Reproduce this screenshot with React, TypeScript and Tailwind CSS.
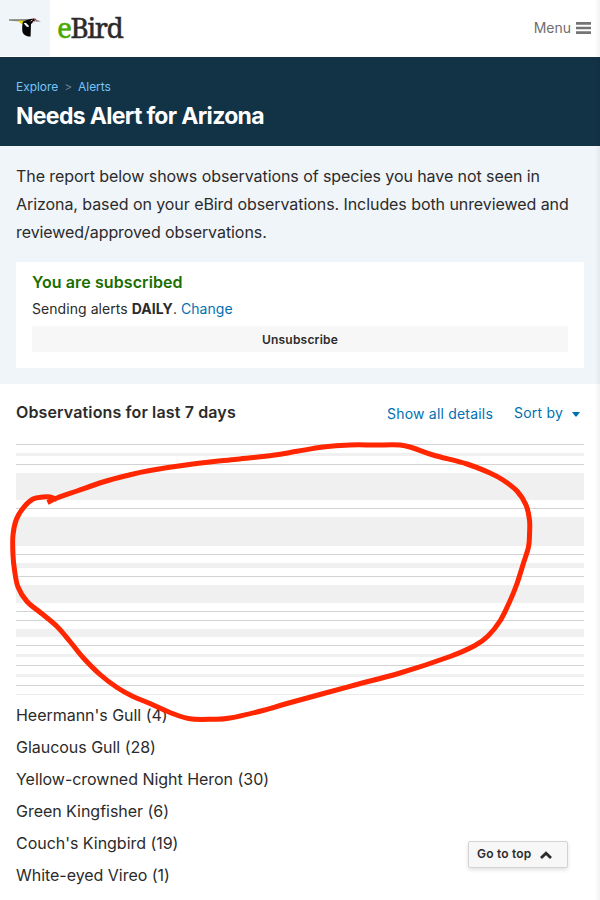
import React from "react";

const sightings = [3, 27, 29, 5, 18, 0, 8, 3, 3];

const species = [
  "Heermann's Gull (4)",
  "Glaucous Gull (28)",
  "Yellow-crowned Night Heron (30)",
  "Green Kingfisher (6)",
  "Couch's Kingbird (19)",
  "White-eyed Vireo (1)",
];

const strokePoints: [number, number][] = [
  [47.5, 502.5], [57, 498], [77, 491], [103, 482], [127, 475.5], [150, 470.5], [193, 464], [237, 459.2],
  [273, 455.3], [297, 451.3], [323, 447], [350, 445], [375, 445], [400, 445], [413, 448], [433, 455],
  [467, 464], [490, 473], [503, 480], [517, 491], [526, 505], [529.5, 520], [529.5, 535], [528.5, 547],
  [523.5, 563], [516.5, 585], [509.5, 602], [500, 621], [488, 636], [475, 645.5], [450, 656.5], [400, 673],
  [350, 686.3], [287, 703.5], [263, 710.5], [230, 718], [213, 719.2], [190, 718.8], [170, 712.5],
  [150, 703.5], [133, 696.5], [117, 687.5], [100, 674.5], [83, 657.5], [70, 641.5], [57, 626.5],
  [41, 613], [27, 601.5], [18, 587], [14.5, 570], [13, 555], [13, 535], [16.5, 519], [24, 507],
  [33, 499], [43, 497], [50, 497], [57, 499.5],
];

// Smooths the freehand points into cubic segments.
function smoothPath(pts: [number, number][]) {
  let d = `M${pts[0][0]} ${pts[0][1]}`;
  for (let i = 0; i < pts.length - 1; i++) {
    const a = pts[Math.max(i - 1, 0)];
    const b = pts[i];
    const c = pts[i + 1];
    const e = pts[Math.min(i + 2, pts.length - 1)];
    d += ` C${b[0] + (c[0] - a[0]) / 6} ${b[1] + (c[1] - a[1]) / 6} ${c[0] - (e[0] - b[0]) / 6} ${c[1] - (e[1] - b[1]) / 6} ${c[0]} ${c[1]}`;
  }
  return d;
}

function BirdMark() {
  return (
    <svg width="50" height="56" viewBox="0 0 50 56" aria-hidden="true">
      <path d="M9 19.2 L30 19 L30 21 L22 21.4 L9 20.7 Z" fill="#85857f" />
      <path d="M17.5 20.8 L25 20.8 L23.5 24.3 L21.5 24 Z" fill="#e6dc00" />
      <path d="M23 21.5 L30 19 L34 18.6 L35.5 20.6 L33 22.6 L31 24 L30.6 36.5 C27 36.8 23.2 35 22.4 31.500 C22 28.500 22.200 24 23 21.500 Z" fill="#050505" />
      <path d="M23.600 23.300 L25.800 22.700 L28.800 25.800 L28.600 27.300 L26.500 26.500 Z" fill="#f4f7fa" />
      <path d="M30.500 21.200 L32.500 19.800 M32.300 22.400 L34.500 20.800" stroke="#e0a4ac" strokeWidth="1" />
      <path d="M33.500 18.400 L36 18.800 L36.300 20.200 L34.500 20.200 Z" fill="#b3303c" />
      <path d="M36 19.600 L41 21.500 L35.500 21.700 Z" fill="#85858a" />
    </svg>
  );
}

export default function App() {
  return (
    <div className="relative h-[900px] w-[600px] overflow-hidden bg-white font-['Inter','Liberation_Sans',sans-serif] text-[#2b2b2b]">
      <header className="flex h-[57px] items-stretch">
        <div className="h-[56px] w-[50px] bg-[#f0f5fa]">
          <BirdMark />
        </div>
        <div className="pt-[7px] pl-[7px] font-['Noto_Serif','DejaVu_Serif','Liberation_Serif',serif] text-[28px] leading-[40px] tracking-[-1.5px] [-webkit-text-stroke:0.5px_currentColor]">
          <span className="text-[#46a800]">e</span>Bird
        </div>
        <div className="ml-auto flex items-center gap-[5px] pr-[9px] text-[14px] text-[#6f6f6f]">
          <span className="-mt-[2px]">Menu</span>
          <svg className="-mt-px" width="15" height="12" viewBox="0 0 15 12" fill="#747474">
            <path d="M0 0h15v2.700H0zM0 4.650h15v2.700H0zM0 9.300h15v2.700H0z" />
          </svg>
        </div>
      </header>

      <section className="h-[89px] bg-[#123246] px-4 pt-[21px]">
        <nav className="flex h-[18px] items-center text-[12px] tracking-[-0.05px] text-[#75c5f5]">
          <span>Explore</span>
          <span className="mx-[6px] text-[#6d7c86]">&gt;</span>
          <span>Alerts</span>
        </nav>
        <h1 className="mt-[5px] text-[23px] leading-[30px] font-bold tracking-[-0.68px] whitespace-nowrap text-white">Needs Alert for Arizona</h1>
      </section>

      <section className="h-[238px] bg-[#f0f5fa] px-4 pt-4">
        <p className="text-[16px] leading-[28px] tracking-[-0.07px] whitespace-nowrap">
          The report below shows observations of species you have not seen in
          <br />
          Arizona, based on your eBird observations. Includes both unreviewed and
          <br />
          reviewed/approved observations.
        </p>
        <div className="mt-4 h-[106px] bg-white px-4 pt-[8px]">
          <h2 className="text-[16px] leading-[24px] font-semibold tracking-[0.1px] text-[#1a6e00]">You are subscribed</h2>
          <p className="mt-[4px] text-[14px] leading-[22px] tracking-[0.06px]">
            Sending alerts <b className="font-bold">DAILY</b>. <span className="text-[#0070b3]">Change</span>
          </p>
          <button className="mt-[6px] block h-[26px] w-full rounded-[2px] bg-[#f7f7f7] pt-px text-[12px] font-semibold tracking-[0.2px]">Unsubscribe</button>
        </div>
      </section>

      <section className="px-4">
        <div className="flex h-[60px] items-center">
          <h2 className="-mt-[5px] text-[16px] font-semibold tracking-[0.14px]">Observations for last 7 days</h2>
          <div className="-mt-[2px] ml-auto flex items-center text-[14px] tracking-[0.2px] text-[#0070b3]">
            <span>Show all details</span>
            <span className="-mt-[2px] ml-[21px]">Sort by</span>
            <svg className="mt-[2px] mr-[4px] ml-[9px]" width="8" height="5" viewBox="0 0 8 5" fill="currentColor">
              <path d="M0 0h8L4.600 4.600h-1.200z" />
            </svg>
          </div>
        </div>
        {sightings.map((height, i) => (
          <div key={i} className={height ? "border-t border-[#d3d3d3] py-2" : "border-t border-[#d3d3d3] pt-2"}>
            <div className="bg-[#f0f0f0]" style={{ height }} />
          </div>
        ))}
        <div className="border-t border-[#d3d3d3] pt-2">
          <div className="h-px bg-[#ececec]" />
        </div>
        <ul className="pt-[4px] text-[16px] leading-[32px] tracking-[-0.03px]">
          {species.map((name) => (
            <li key={name}>{name}</li>
          ))}
        </ul>
      </section>

      <svg className="pointer-events-none absolute inset-0" width="600" height="900" viewBox="0 0 600 900" fill="none">
        <path d={smoothPath(strokePoints)} stroke="#ff2600" strokeWidth="5" strokeLinejoin="round" />
      </svg>

      <button className="absolute top-[841px] left-[468px] flex h-[27px] w-[100px] items-center rounded-[2px] border border-[#d3d3d3] bg-[#f7f7f7] pb-[2px] pl-2 text-[12px] font-semibold tracking-[0.2px] shadow-[0_2px_4px_rgba(0,0,0,0.12)]">
        Go to top
        <svg className="mt-[3px] ml-[9px]" width="12" height="8" viewBox="0 0 12 8" fill="none" stroke="#2b2b2b" strokeWidth="2.800">
          <path d="M1 7L6 2.200L11 7" />
        </svg>
      </button>
      <div className="pointer-events-none absolute inset-y-0 right-0 w-[5px] bg-gradient-to-r from-transparent to-black/5" />
    </div>
  );
}
